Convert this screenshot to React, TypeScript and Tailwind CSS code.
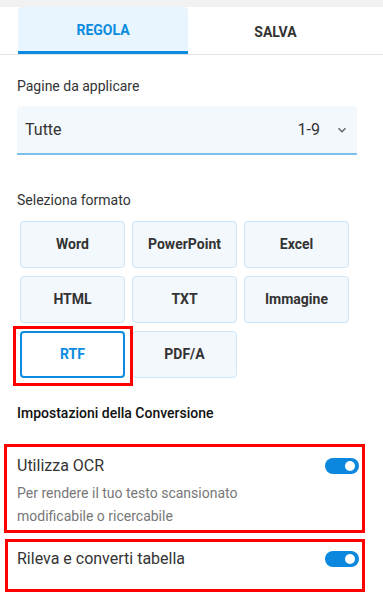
import React from "react";

const formats = ["Word", "PowerPoint", "Excel", "HTML", "TXT", "Immagine", "RTF", "PDF/A"];

const Toggle = () => (
  <div className="flex h-4 w-[34px] items-center justify-end rounded-full bg-[#0b87dd] pr-[4px]">
    <div className="h-[10px] w-[10px] rounded-full bg-white" />
  </div>
);

export default function App() {
  return (
    <div className="h-[597px] w-[383px] overflow-hidden bg-white font-['Roboto',sans-serif] text-[#333]">
      <div className="h-[7px] bg-[#f1f1f1]" />
      {/* tabs */}
      <div className="flex border-b border-[#e2e2e2] pl-[18px]">
        <div className="flex h-[47px] w-[170px] items-center justify-center rounded-t-[4px] border-b-[3px] border-[#0b8ce0] bg-[#e8f4fe] pt-[3px] text-[14px] font-bold text-[#0b8ce0]">
          REGOLA
        </div>
        <div className="flex h-[47px] w-[175px] items-center justify-center pt-[3px] text-[14px] font-bold text-[#333]">
          SALVA
        </div>
      </div>

      <div className="px-[17px]">
        <div className="pt-[21px] text-[14px] leading-[20px] text-[#333]">Pagine da applicare</div>
        <div className="mt-[10px] flex h-[49px] w-[340px] items-center rounded-t-[4px] border-b-2 border-[#7cc0ec] bg-[#f3f8fd] pl-[8px] pr-[10px] text-[16px] text-[#333]">
          <span className="flex-1">Tutte</span>
          <span className="mr-[17px]">1-9</span>
          <svg width="10" height="6" viewBox="0 0 10 6" className="mt-[1px]">
            <path d="M1.5 1.2 L5 4.7 L8.5 1.2" fill="none" stroke="#666" strokeWidth="1.5" />
          </svg>
        </div>

        <div className="pt-[35px] text-[14px] leading-[20px] text-[#333]">Seleziona formato</div>
        <div className="mt-[11px] ml-[3px] grid w-[329px] grid-cols-3 gap-x-[7px] gap-y-[8px]">
          {formats.map((f) =>
            f === "RTF" ? (
              <div key={f} className="relative">
                <div className="flex h-[47px] items-center justify-center rounded-[4px] border-2 border-[#0b8ce0] bg-white text-[14px] font-bold text-[#0b8ce0]">
                  {f}
                </div>
                <div className="pointer-events-none absolute -top-[5px] -left-[7px] -right-[8px] -bottom-[8px] border-[3px] border-[#ff0000]" />
              </div>
            ) : (
              <div
                key={f}
                className="flex h-[47px] items-center justify-center rounded-[4px] border border-[#cde6f9] bg-[#f3f8fd] text-[14px] font-bold text-[#333]"
              >
                {f}
              </div>
            )
          )}
        </div>

        <div className="pt-[25px] text-[14px] font-medium leading-[20px] text-[#111]">Impostazioni della Conversione</div>
      </div>

      <div className="mt-[21px] ml-[4px] w-[361px] border-[3px] border-[#ff0000] pl-[10px] pr-[3px] pt-[8px] pb-[2px]">
        <div className="flex items-center justify-between">
          <span className="text-[16px] leading-[22px] text-[#333]">Utilizza OCR</span>
          <Toggle />
        </div>
        <div className="mt-[5px] text-[14px] leading-[23px] text-[#777]">
          Per rendere il tuo testo scansionato
          <br />
          modificabile o ricercabile
        </div>
      </div>

      <div className="mt-[6px] ml-[5px] h-[53px] w-[360px] border-[3px] border-[#ff0000] pl-[9px] pr-[3px] pt-[6px]">
        <div className="flex items-center justify-between">
          <span className="text-[16px] leading-[22px] text-[#333]">Rileva e converti tabella</span>
          <Toggle />
        </div>
      </div>
    </div>
  );
}
